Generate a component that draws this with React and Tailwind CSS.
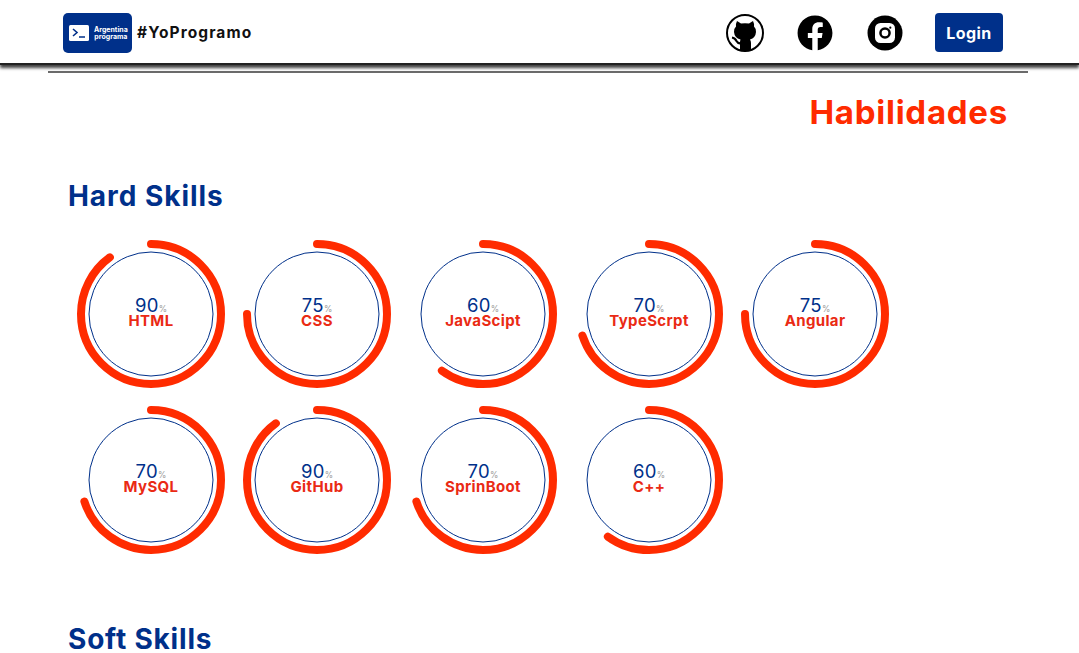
import React from "react";
import { FaFacebook } from "react-icons/fa";

const FONT = "font-['Inter','Liberation_Sans',sans-serif]";

const hard = [
  [90, "HTML"], [75, "CSS"], [60, "JavaScipt"], [70, "TypeScrpt"], [75, "Angular"],
  [70, "MySQL"], [90, "GitHub"], [70, "SprinBoot"], [60, "C++"],
];

function Ring({ value, label }) {
  return (
    <div className="w-[166px] h-[166px] flex items-center justify-center">
      <svg width="150" height="150" viewBox="0 0 150 150">
        <circle cx="75" cy="75" r="62" fill="none" stroke="#00308a" strokeWidth="1" />
        <circle
          cx="75" cy="75" r="70" fill="none" stroke="#ff2b00" strokeWidth="8" strokeLinecap="round"
          pathLength="100" strokeDasharray={`${value} 100`} transform="rotate(-90 75 75)"
        />
        <text x="75" y="72.5" textAnchor="middle" fontFamily="Inter, sans-serif">
          <tspan fontSize="18.5" fill="#00308a" letterSpacing="0.3">{value}</tspan>
          <tspan fontSize="8.5" fill="#9a9a9a">%</tspan>
        </text>
        <text x="75" y="87" textAnchor="middle" fontFamily="Inter, sans-serif" fontSize="15" fontWeight="700" letterSpacing="0.35" fill="#ea2a14">{label}</text>
      </svg>
    </div>
  );
}

function Logo() {
  return (
    <div className="w-[69px] h-[40px] rounded-[5px] bg-[#00308a] flex items-center gap-[5px] pl-[6px]">
      <svg width="20" height="16" viewBox="0 0 20 16" className="shrink-0">
        <rect width="20" height="16" rx="1.5" fill="#fff" />
        <path d="M4 4l4 3.5L4 11" fill="none" stroke="#00308a" strokeWidth="1.6" />
        <path d="M10 12h6" stroke="#00308a" strokeWidth="1.5" />
      </svg>
      <div className="text-white text-[7px] leading-[7px] font-bold text-center">Argentina<br />programa</div>
    </div>
  );
}

function Github() {
  return (
    <svg width="38" height="38" viewBox="0 0 38 38">
      <circle cx="19" cy="19" r="18" fill="none" stroke="#000" strokeWidth="2" />
      <path
        d="M11 7 L15 9.5 Q19 8.8 23 9.5 L27 7 Q28.5 10 28 12.5 Q30.5 15 30 18 Q29.5 24 24 25.5 Q25 27 25 29 L25 36.5 Q19 38 14 36.5 L14 28 Q14 27 14.5 25.5 Q8.5 24 8 18 Q7.5 15 10 12.5 Q9.5 10 11 7 Z"
        fill="#000"
      />
      <path d="M6 23.5 Q9 24 10.5 27 Q12 29.8 15 29.2" fill="none" stroke="#000" strokeWidth="2.2" />
    </svg>
  );
}

function Instagram() {
  return (
    <svg width="36" height="36" viewBox="0 0 36 36">
      <circle cx="18" cy="18" r="17.5" fill="#000" />
      <rect x="8" y="8" width="20" height="20" rx="5.5" fill="#fff" />
      <circle cx="18" cy="18" r="5.8" fill="#000" />
      <circle cx="18" cy="18" r="3.3" fill="#fff" />
      <circle cx="23.3" cy="12.7" r="1.1" fill="#000" />
    </svg>
  );
}

export default function App() {
  return (
    <div className={`${FONT} h-[653px] w-[1079px] overflow-hidden bg-white`}>
      <header className="h-[65px] pt-[2px] flex items-center justify-between pl-[63px] pr-[76px] bg-white shadow-[0_3px_3px_rgba(0,0,0,0.75)] border-b-2 border-[#222] relative">
        <div className="flex items-center gap-[5px]">
          <Logo />
          <span className="text-[15.5px] font-bold text-[#111] tracking-[1.1px]">#YoProgramo</span>
        </div>
        <div className="flex items-center">
          <div className="mr-[33px] h-[38px]"><Github /></div>
          <FaFacebook className="text-[36px] text-black mr-[34px]" />
          <div className="mr-[32px] h-[36px]"><Instagram /></div>
          <button className="w-[68px] h-[39px] rounded-[4px] bg-[#00308a] text-white text-[16px] font-bold tracking-[0.4px]">Login</button>
        </div>
      </header>
      <div className="ml-[48px] mr-[51px] mt-[6px] h-[2px] bg-[#6b6b6b]" />
      <h1 className="text-right pr-[71px] mt-[19px] text-[33px] leading-[40px] font-bold text-[#ff2b00] tracking-[0.75px]">Habilidades</h1>
      <h2 className="pl-[68px] mt-[47px] text-[28px] leading-[34px] font-bold text-[#00308a] tracking-[0.95px]">Hard Skills</h2>
      <div className="ml-[68px] mt-[18px] w-[830px] flex flex-wrap">
        {hard.map(([v, l]) => <Ring key={l} value={v} label={l} />)}
      </div>
      <h2 className="pl-[68px] mt-[62px] text-[28px] leading-[28px] font-bold text-[#00308a] tracking-[0.8px]">Soft Skills</h2>
    </div>
  );
}
